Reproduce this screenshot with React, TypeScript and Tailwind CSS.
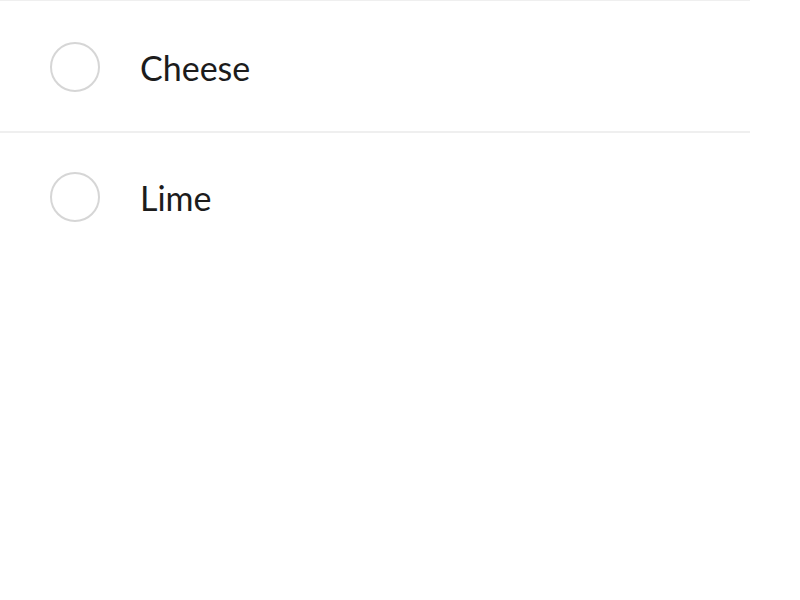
const items = ["Cheese", "Lime"];

export default function App() {
  return (
    <div className="min-h-screen w-full bg-white" style={{ fontFamily: "Lato, 'Noto Sans', sans-serif" }}>
      <ul className="w-[750px]">
        {items.map((item) => (
          <li
            key={item}
            className="flex h-[130px] items-center gap-[40px] border-t-2 border-[#efefef] pl-[50px] first:h-[131px] first:border-t first:pt-[2px]"
          >
            <span className="h-[50px] w-[50px] shrink-0 rounded-full border-2 border-[#d6d6d6]" />
            <span className="mt-[2px] text-[34px] leading-none text-[#1c1c1c]">{item}</span>
          </li>
        ))}
      </ul>
    </div>
  );
}
